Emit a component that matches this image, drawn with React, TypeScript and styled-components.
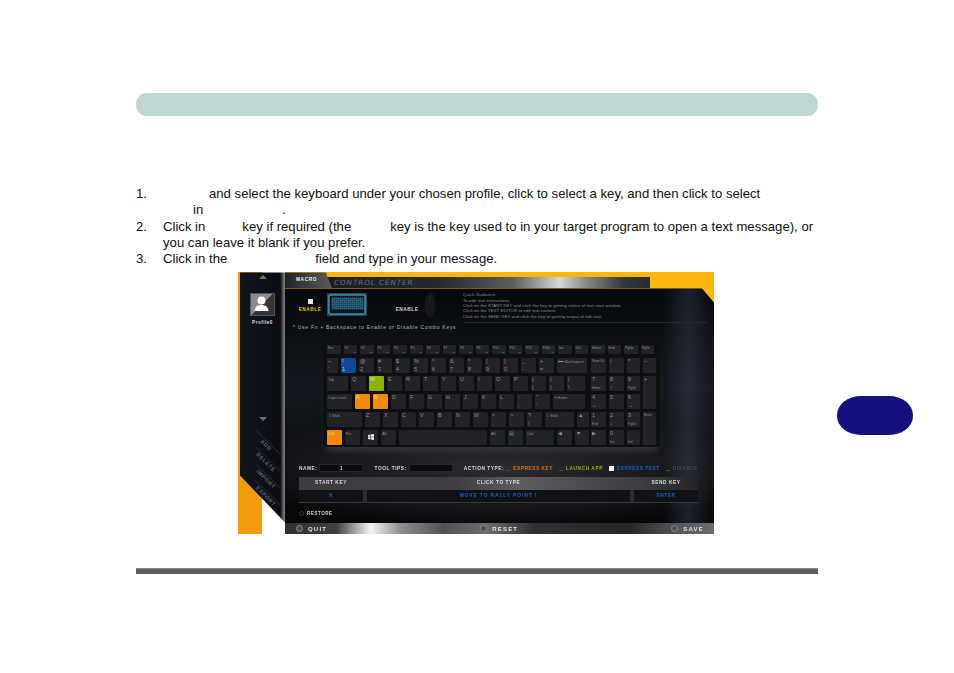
import React from 'react';
import styled, { createGlobalStyle } from 'styled-components';

const GlobalStyle = createGlobalStyle`
  html, body {
    margin: 0;
    background: #fff;
  }
`;

const Page = styled.div`
  position: relative;
  width: 954px;
  height: 673px;
  padding: 93px 136px 0;
  box-sizing: border-box;
  font-family: "Liberation Sans", Arial, sans-serif;
  color: #111;
  overflow: hidden;
`;

const HeaderPill = styled.div`
  height: 23px;
  border-radius: 11px;
  background: #bfd6d3;
`;

const Steps = styled.ol`
  list-style: none;
  margin: 70px 0 0;
  padding: 0;
  width: 690px;
  font-size: 13.15px;
  line-height: 16.3px;
`;

const Step = styled.li`
  display: grid;
  grid-template-columns: 27px 1fr;
`;

const Line = styled.div`
  white-space: nowrap;
`;

const Blank = styled.span<{ $w: number }>`
  display: inline-block;
  width: ${p => p.$w}px;
`;

const Shot = styled.div`
  display: flex;
  width: 476px;
  height: 262px;
  margin: 5px 0 0 102px;
  background: #fdb60e;
  overflow: hidden;
  filter: blur(0.4px);
`;

const SideColumn = styled.div`
  width: 47px;
  flex: none;
  background: linear-gradient(90deg, #f39a10 0 24px, #fff 24px 100%);
`;

const Sidebar = styled.div`
  height: 100%;
  display: flex;
  flex-direction: column;
  align-items: center;
  box-sizing: border-box;
  padding: 3px 0 0 2px;
  background: linear-gradient(90deg, #10151e, #0a0d13 90%, #777 98%);
  clip-path: polygon(2px 0, 100% 0, 100% 250px, 2px 203px);
`;

const Arrow = styled.div<{ $down?: boolean }>`
  width: 0;
  height: 0;
  border-left: 4px solid transparent;
  border-right: 4px solid transparent;
  border-${p => (p.$down ? 'top' : 'bottom')}: 4px solid #6d7278;
`;

const ProfileTile = styled.div`
  width: 23px;
  height: 21px;
  margin-top: 14px;
  background: linear-gradient(135deg, #8a8a8a 0 50%, #333 50% 100%);
  border: 1px solid #555;
`;

const ProfileName = styled.div`
  margin-top: 4px;
  font-size: 4.6px;
  font-weight: bold;
  letter-spacing: 0.5px;
  color: #ddd;
`;

const SideSpacer = styled.div`
  height: 92px;
`;

const SideActions = styled.div`
  display: flex;
  flex-direction: column;
  align-items: center;
  gap: 9px;
  margin: 20px 0 0 6px;
`;

const SideAction = styled.div`
  width: 38px;
  height: 8px;
  box-sizing: border-box;
  text-align: center;
  font-size: 5.4px;
  font-weight: bold;
  letter-spacing: 0.6px;
  line-height: 7px;
  color: #60666e;
  border-top: 1px solid #23262b;
  transform: rotate(45deg);
`;

const Main = styled.div`
  flex: 1;
  display: flex;
  flex-direction: column;
  min-width: 0;
`;

const TopRow = styled.div`
  display: flex;
  height: 16px;
  flex: none;
  align-items: flex-end;
`;

const MacroTab = styled.div`
  position: relative;
  z-index: 1;
  width: 47px;
  height: 16px;
  box-sizing: border-box;
  padding: 5px 0 0 11px;
  margin-right: -6px;
  font-size: 4.8px;
  font-weight: bold;
  letter-spacing: 0.6px;
  color: #eee;
  background: linear-gradient(90deg, #1f2226, #5a5d60);
  clip-path: polygon(0 0, 41px 0, 47px 16px, 0 16px);
`;

const TitleBar = styled.div`
  width: 324px;
  height: 11px;
  box-sizing: border-box;
  padding-left: 8px;
  font-family: "DejaVu Sans", sans-serif;
  font-size: 7.2px;
  font-style: italic;
  line-height: 12px;
  letter-spacing: 0.95px;
  color: #6e7378;
  background: linear-gradient(90deg, #1b1d20, #26282b 35%, #5c5e60 58%, #d8d8d8 72%, #8a8a8a 80%, #33363a 92%, #2a2c2f);
`;

const Panel = styled.div`
  flex: 1;
  display: flex;
  flex-direction: column;
  min-height: 0;
  background:
    linear-gradient(90deg, transparent 88%, rgba(80, 95, 125, 0.28) 94%, transparent 100%),
    radial-gradient(ellipse 260px 60px at 50% 74%, #2a2c30, transparent 100%),
    linear-gradient(180deg, #06080c, #14171d 40%, #0b0c0f 80%, #050506);
  clip-path: polygon(0 0, calc(100% - 12px) 0, 100% 14px, 100% 100%, 0 100%);
`;

const ConfigRow = styled.div`
  display: flex;
  align-items: flex-start;
  height: 36px;
  flex: none;
  padding-left: 13px;
`;

const EnableBlock = styled.div<{ $left: number }>`
  width: 24px;
  margin-left: ${p => p.$left}px;
  display: flex;
  flex-direction: column;
  align-items: center;
`;

const CheckBox = styled.div<{ $on?: boolean }>`
  width: 5px;
  height: 5px;
  margin: 11px 0 3px;
  background: ${p => (p.$on ? '#e8e8e8' : 'transparent')};
`;

const EnableLabel = styled.div<{ $active?: boolean }>`
  margin-top: ${p => (p.$active ? 0 : 19)}px;
  font-size: 4.8px;
  font-weight: bold;
  letter-spacing: 0.5px;
  white-space: nowrap;
  color: ${p => (p.$active ? '#d9c21c' : '#d6d6d6')};
`;

const ThumbWrap = styled.div`
  margin: 5px 0 0 5px;
  width: 40px;
  height: 23px;
`;

const MouseWrap = styled.div`
  margin: 4px 0 0 5px;
  width: 12px;
  height: 26px;
`;

const InfoBox = styled.div`
  margin: 4px 0 0 27px;
  width: 244px;
  height: 30px;
  font-size: 4.3px;
  line-height: 5.3px;
  letter-spacing: 0.1px;
  color: #8d9298;
  white-space: nowrap;
  border-bottom: 1px solid #25282d;
`;

const Notice = styled.div`
  height: 8px;
  padding-left: 8px;
  font-size: 4.9px;
  line-height: 8px;
  letter-spacing: 0.77px;
  white-space: nowrap;
  color: #b8babd;
`;

const Keyboard = styled.div`
  width: 337px;
  height: 105px;
  margin: 10px 0 0 38px;
  box-sizing: border-box;
  padding: 3px 0 0 4px;
  flex: none;
  background: #0e0f11;
  border-radius: 2px;
  box-shadow: 0 7px 6px -3px #34363a;
`;

const FnRow = styled.div`
  display: flex;
  gap: 3px;
  margin-bottom: 4px;
`;

const KeyArea = styled.div`
  display: flex;
  gap: 3px;
`;

const MainKeys = styled.div`
  width: 261px;
  display: flex;
  flex-direction: column;
  gap: 3px;
`;

const KeyRow = styled.div`
  display: flex;
  gap: 3px;
`;

const NumPad = styled.div`
  display: grid;
  grid-template-columns: 15px 15px 13px 13px;
  grid-auto-rows: 15px;
  gap: 3px;
`;

const toneColor: Record<string, string> = {
  plain: '#222326',
  blue: '#0d4a9c',
  green: '#8db20c',
  orange: '#ef8a0a',
};

const KeyCap = styled.div<{ $w?: number; $h?: number; $tone: string; $tall?: boolean; $size?: number }>`
  width: ${p => (p.$w ? `${p.$w}px` : 'auto')};
  height: ${p => p.$h ?? 15}px;
  flex: none;
  box-sizing: border-box;
  padding: 1px;
  display: flex;
  flex-direction: column;
  justify-content: space-between;
  overflow: hidden;
  grid-row: ${p => (p.$tall ? 'span 2' : 'auto')};
  font-size: ${p => p.$size ?? 3.9}px;
  line-height: 5px;
  white-space: nowrap;
  color: ${p => (p.$tone === 'plain' ? '#8e9094' : '#e9dccb')};
  background: ${p => toneColor[p.$tone]};
  border-radius: 1px;
`;

const BottomLegend = styled.span<{ $word: boolean }>`
  font-size: ${p => (p.$word ? '3.2px' : 'inherit')};
  line-height: ${p => (p.$word ? '4px' : '5px')};
`;

const SubLabel = styled.span`
  color: #2a78d6;
  text-align: right;
  font-size: 3.6px;
  line-height: 4px;
`;

const FormRow = styled.div`
  display: flex;
  align-items: center;
  height: 10px;
  margin-top: 16px;
  padding-left: 14px;
  flex: none;
  font-size: 4.8px;
  font-weight: bold;
  letter-spacing: 0.55px;
  white-space: nowrap;
  color: #d8d8d8;
`;

const FormInput = styled.div`
  width: 44px;
  height: 8px;
  margin-left: 2px;
  box-sizing: border-box;
  text-align: center;
  line-height: 7px;
  background: #0a0b0d;
  border: 1px solid #24262a;
`;

const FormLabel = styled.span<{ $left: number }>`
  margin-left: ${p => p.$left}px;
`;

const ActionOption = styled.span<{ $color: string; $on?: boolean; $left: number }>`
  display: inline-flex;
  align-items: center;
  gap: 3px;
  margin-left: ${p => p.$left}px;
  color: ${p => p.$color};
  &::before {
    content: '';
    width: ${p => (p.$on ? 5 : 4)}px;
    height: ${p => (p.$on ? 5 : 1)}px;
    align-self: ${p => (p.$on ? 'center' : 'flex-end')};
    background: ${p => (p.$on ? '#fff' : '#44474c')};
  }
`;

const KeyTable = styled.div`
  width: 399px;
  margin: 4px 0 0 14px;
  flex: none;
  display: grid;
  grid-template-columns: 64px 1fr 64px;
  grid-template-rows: 13px 13px;
  column-gap: 4px;
  font-size: 4.8px;
  font-weight: bold;
  letter-spacing: 0.55px;
  text-align: center;
  background:
    linear-gradient(180deg, transparent 0 13px, #2a2c30 13px 100%),
    linear-gradient(90deg, #3a3c3f, #3d3f42 40%, #5b5d60 55%, #3c3e42 85%, #222428);
`;

const HeadCell = styled.div`
  line-height: 12px;
  color: #dcdcdc;
`;

const ValueCell = styled.div<{ $wide?: boolean }>`
  line-height: 12px;
  letter-spacing: ${p => (p.$wide ? 0.95 : 0.55)}px;
  color: #1a62c8;
  background: #111216;
  border-bottom: 1px solid #36383c;
`;

const RestoreRow = styled.div`
  display: flex;
  align-items: center;
  gap: 3px;
  height: 8px;
  margin-top: 6px;
  padding-left: 14px;
  font-size: 4.6px;
  font-weight: bold;
  letter-spacing: 0.5px;
  color: #d0d0d0;
`;

const RestoreDot = styled.span`
  width: 5px;
  height: 5px;
  border: 1px solid #333;
  border-radius: 50%;
  box-sizing: border-box;
`;

const BottomBar = styled.div`
  margin-top: auto;
  height: 11px;
  flex: none;
  box-sizing: border-box;
  padding: 0 10px 0 11px;
  display: flex;
  align-items: center;
  justify-content: space-between;
  font-size: 6px;
  font-weight: bold;
  letter-spacing: 1.2px;
  color: #e6e6e6;
  background: linear-gradient(90deg, #2e3033, #3d3f42 12%, #9b9c9d 16%, #f4f4f4 20%, #8c8e90 27%, #505257 37%, #6b6d70 47%, #2f3134 58%, #24262a 80%, #55585c 92%, #6a6c70);
`;

const BarItem = styled.span`
  display: inline-flex;
  align-items: center;
  gap: 5px;
`;

const BarIcon = styled.span`
  width: 7px;
  height: 7px;
  border: 1px solid #8c8e91;
  border-radius: 50%;
  box-sizing: border-box;
  background: #4b4d50;
`;

const Footer = styled.div`
  height: 6px;
  margin-top: 34px;
  background: #5f5f5f;
  border-top: 1px solid #8a8a8a;
  box-sizing: border-box;
`;

const ChapterTab = styled.div`
  position: absolute;
  left: 837px;
  top: 396px;
  width: 76px;
  height: 39px;
  background: #14107f;
  border-radius: 24px / 19px;
`;

type KeyDef = { t?: string; b?: string; w?: number; tone?: string; win?: boolean };

const fnKeys = ['Esc', 'F1', 'F2', 'F3', 'F4', 'F5', 'F6', 'F7', 'F8', 'F9', 'F10', 'F11', 'F12', 'PrtSc', 'Ins', 'Del', 'Home', 'End', 'PgUp', 'PgDn'];

const mainRows: KeyDef[][] = [
  [
    { t: '~', b: '`', w: 11 }, { t: '!', b: '1', w: 15, tone: 'blue' }, { t: '@', b: '2', w: 15 }, { t: '#', b: '3', w: 15 },
    { t: '$', b: '4', w: 15 }, { t: '%', b: '5', w: 15 }, { t: '^', b: '6', w: 15 }, { t: '&', b: '7', w: 15 },
    { t: '*', b: '8', w: 15 }, { t: '(', b: '9', w: 15 }, { t: ')', b: '0', w: 15 }, { t: '_', b: '-', w: 15 },
    { t: '+', b: '=', w: 15 }, { t: '⟵ Backspace', w: 30 },
  ],
  [
    { t: 'Tab', w: 21 }, { t: 'Q', w: 15 }, { t: 'W', w: 15, tone: 'green' }, { t: 'E', w: 15 }, { t: 'R', w: 15 },
    { t: 'T', w: 15 }, { t: 'Y', w: 15 }, { t: 'U', w: 15 }, { t: 'I', w: 15 }, { t: 'O', w: 15 }, { t: 'P', w: 15 },
    { t: '{', b: '[', w: 15 }, { t: '}', b: ']', w: 15 }, { t: '|', b: '\\', w: 18 },
  ],
  [
    { t: 'Caps Lock', w: 25 }, { t: 'A', w: 15, tone: 'orange' }, { t: 'S', w: 15, tone: 'orange' }, { t: 'D', w: 15 },
    { t: 'F', w: 15 }, { t: 'G', w: 15 }, { t: 'H', w: 15 }, { t: 'J', w: 15 }, { t: 'K', w: 15 }, { t: 'L', w: 15 },
    { t: ':', b: ';', w: 15 }, { t: '"', b: "'", w: 15 }, { t: '↵ Enter', w: 32 },
  ],
  [
    { t: '⇧ Shift', w: 35 }, { t: 'Z', w: 15 }, { t: 'X', w: 15 }, { t: 'C', w: 15 }, { t: 'V', w: 15 }, { t: 'B', w: 15 },
    { t: 'N', w: 15 }, { t: 'M', w: 15 }, { t: '<', b: ',', w: 15 }, { t: '>', b: '.', w: 15 }, { t: '?', b: '/', w: 15 },
    { t: '⇧ Shift', w: 29 }, { t: '▲', w: 12 },
  ],
  [
    { t: 'Ctrl', w: 15, tone: 'orange' }, { t: 'Fn', w: 15 }, { win: true, w: 15 }, { t: 'Alt', w: 15 }, { w: 88 },
    { t: 'Alt', w: 15 }, { t: '▤', w: 15 }, { t: 'Ctrl', w: 28 }, { t: '◀', w: 15 }, { t: '▼', w: 14 },
  ],
];

const numKeys: { t: string; b?: string; tall?: boolean }[] = [
  { t: 'Num Lk' }, { t: '/' }, { t: '*' }, { t: '–' },
  { t: '7', b: 'Home' }, { t: '8', b: '↑' }, { t: '9', b: 'PgUp' }, { t: '+', tall: true },
  { t: '4', b: '←' }, { t: '5' }, { t: '6', b: '→' },
  { t: '1', b: 'End' }, { t: '2', b: '↓' }, { t: '3', b: 'PgDn' }, { t: 'Enter', tall: true },
  { t: '▶' }, { t: '0', b: 'Ins' }, { t: '.', b: 'Del' },
];

const guideLines = [
  'Quick Guidance:',
  'To edit text instructions:',
  'Click on the START KEY and click the key to getting notice of text start window.',
  'Click on the TEXT EDITOR to edit text content.',
  'Click on the SEND KEY and click the key to getting output of edit text.',
];

const WinGlyph = () => (
  <svg width="6" height="6" viewBox="0 0 12 12" style={{ margin: '3px auto 0' }}>
    <path d="M0 2l5-.8V5.6H0zM6 1l6-1v5.6H6zM0 6.4h5v4.4L0 10zM6 6.4h6V12l-6-1z" fill="#eee" />
  </svg>
);

const KeyboardThumb = () => (
  <svg width="40" height="23" viewBox="0 0 40 23">
    <rect width="40" height="23" fill="#2a4656" />
    <rect x="2" y="2" width="36" height="19" rx="1" fill="#0a141c" stroke="#4cc3e6" strokeWidth="1" />
    {[5, 9, 13].map(y =>
      [5, 9, 13, 17, 21, 25, 29, 33].map(x => (
        <rect key={`${x}-${y}`} x={x} y={y} width="3" height="3" fill="#12384c" stroke="#53c7ea" strokeWidth="0.4" />
      )),
    )}
  </svg>
);

const MouseThumb = () => (
  <svg width="12" height="26" viewBox="0 0 12 26">
    <ellipse cx="6" cy="13" rx="5.5" ry="12.5" fill="#15171a" />
    <rect x="5.4" y="4" width="1.2" height="5" fill="#26282c" />
  </svg>
);

const ProfileGlyph = () => (
  <svg width="21" height="19" viewBox="0 0 21 19">
    <circle cx="10.5" cy="6.5" r="4" fill="#fff" />
    <path d="M3.5 17c0-4 3-6 7-6s7 2 7 6z" fill="#fff" />
  </svg>
);

const KeyFace = ({ t, b }: { t?: string; b?: string }) => (
  <>
    <span>{t}</span>
    {b && <BottomLegend $word={b.length > 1}>{b}</BottomLegend>}
  </>
);

// single glyph keys carry a bigger legend than the word keys
const legendSize = (t?: string) => (t && t.length === 1 ? 5.4 : undefined);

export default function App() {
  return (
    <Page>
      <GlobalStyle />
      <HeaderPill />

      <Steps>
        <Step>
          <span>1.</span>
          <div>
            <Line><Blank $w={46} />and select the keyboard under your chosen profile, click to select a key, and then click to select</Line>
            <Line><Blank $w={30} />in<Blank $w={79} />.</Line>
          </div>
        </Step>
        <Step>
          <span>2.</span>
          <div>
            <Line>Click in<Blank $w={37} />key if required (the<Blank $w={39} />key is the key used to in your target program to open a text message), or</Line>
            <Line>you can leave it blank if you prefer.</Line>
          </div>
        </Step>
        <Step>
          <span>3.</span>
          <div>
            <Line>Click in the<Blank $w={88} />field and type in your message.</Line>
          </div>
        </Step>
      </Steps>

      <Shot>
        <SideColumn>
          <Sidebar>
            <Arrow />
            <ProfileTile><ProfileGlyph /></ProfileTile>
            <ProfileName>Profile0</ProfileName>
            <SideSpacer />
            <Arrow $down />
            <SideActions>
              <SideAction>ADD</SideAction>
              <SideAction>DELETE</SideAction>
              <SideAction>IMPORT</SideAction>
              <SideAction>EXPORT</SideAction>
            </SideActions>
          </Sidebar>
        </SideColumn>

        <Main>
          <TopRow>
            <MacroTab>MACRO</MacroTab>
            <TitleBar>CONTROL CENTER</TitleBar>
          </TopRow>

          <Panel>
            <ConfigRow>
              <EnableBlock $left={0}>
                <CheckBox $on />
                <EnableLabel $active>ENABLE</EnableLabel>
              </EnableBlock>
              <ThumbWrap><KeyboardThumb /></ThumbWrap>
              <EnableBlock $left={28}>
                <EnableLabel>ENABLE</EnableLabel>
              </EnableBlock>
              <MouseWrap><MouseThumb /></MouseWrap>
              <InfoBox>
                {guideLines.map(line => <div key={line}>{line}</div>)}
              </InfoBox>
            </ConfigRow>

            <Notice>* Use Fn + Backspace to Enable or Disable Combo Keys</Notice>

            <Keyboard>
              <FnRow>
                {fnKeys.map((k, i) => (
                  <KeyCap key={k} $w={13.5} $h={9} $tone="plain" $size={3.4}>
                    <span>{k}</span>
                    {i > 0 && i < 14 && <SubLabel>▪▪</SubLabel>}
                  </KeyCap>
                ))}
              </FnRow>
              <KeyArea>
                <MainKeys>
                  {mainRows.map((row, r) => (
                    <KeyRow key={r}>
                      {row.map((k, i) => (
                        <KeyCap key={i} $w={k.w} $tone={k.tone ?? 'plain'} $size={legendSize(k.t)}>
                          {k.win ? <WinGlyph /> : <KeyFace t={k.t} b={k.b} />}
                        </KeyCap>
                      ))}
                    </KeyRow>
                  ))}
                </MainKeys>
                <NumPad>
                  {numKeys.map((k, i) => (
                    <KeyCap key={i} $tone="plain" $h={k.tall ? 33 : 15} $tall={k.tall} $size={legendSize(k.t) ?? 3.5}>
                      <KeyFace t={k.t} b={k.b} />
                    </KeyCap>
                  ))}
                </NumPad>
              </KeyArea>
            </Keyboard>

            <FormRow>
              <span>NAME:</span>
              <FormInput>1</FormInput>
              <FormLabel $left={11}>TOOL TIPS:</FormLabel>
              <FormInput />
              <FormLabel $left={11}>ACTION TYPE:</FormLabel>
              <ActionOption $left={2} $color="#e2701a">EXPRESS KEY</ActionOption>
              <ActionOption $left={6} $color="#8fb31c">LAUNCH APP</ActionOption>
              <ActionOption $left={6} $on $color="#1a62c8">EXPRESS TEXT</ActionOption>
              <ActionOption $left={6} $color="#45484d">DISABLE</ActionOption>
            </FormRow>

            <KeyTable>
              <HeadCell>START KEY</HeadCell>
              <HeadCell>CLICK TO TYPE</HeadCell>
              <HeadCell>SEND KEY</HeadCell>
              <ValueCell>N</ValueCell>
              <ValueCell $wide>MOVE TO RALLY POINT !</ValueCell>
              <ValueCell>ENTER</ValueCell>
            </KeyTable>

            <RestoreRow>
              <RestoreDot />
              RESTORE
            </RestoreRow>

            <BottomBar>
              <BarItem><BarIcon />QUIT</BarItem>
              <BarItem><BarIcon />RESET</BarItem>
              <BarItem><BarIcon />SAVE</BarItem>
            </BottomBar>
          </Panel>
        </Main>
      </Shot>

      <Footer />
      <ChapterTab />
    </Page>
  );
}
